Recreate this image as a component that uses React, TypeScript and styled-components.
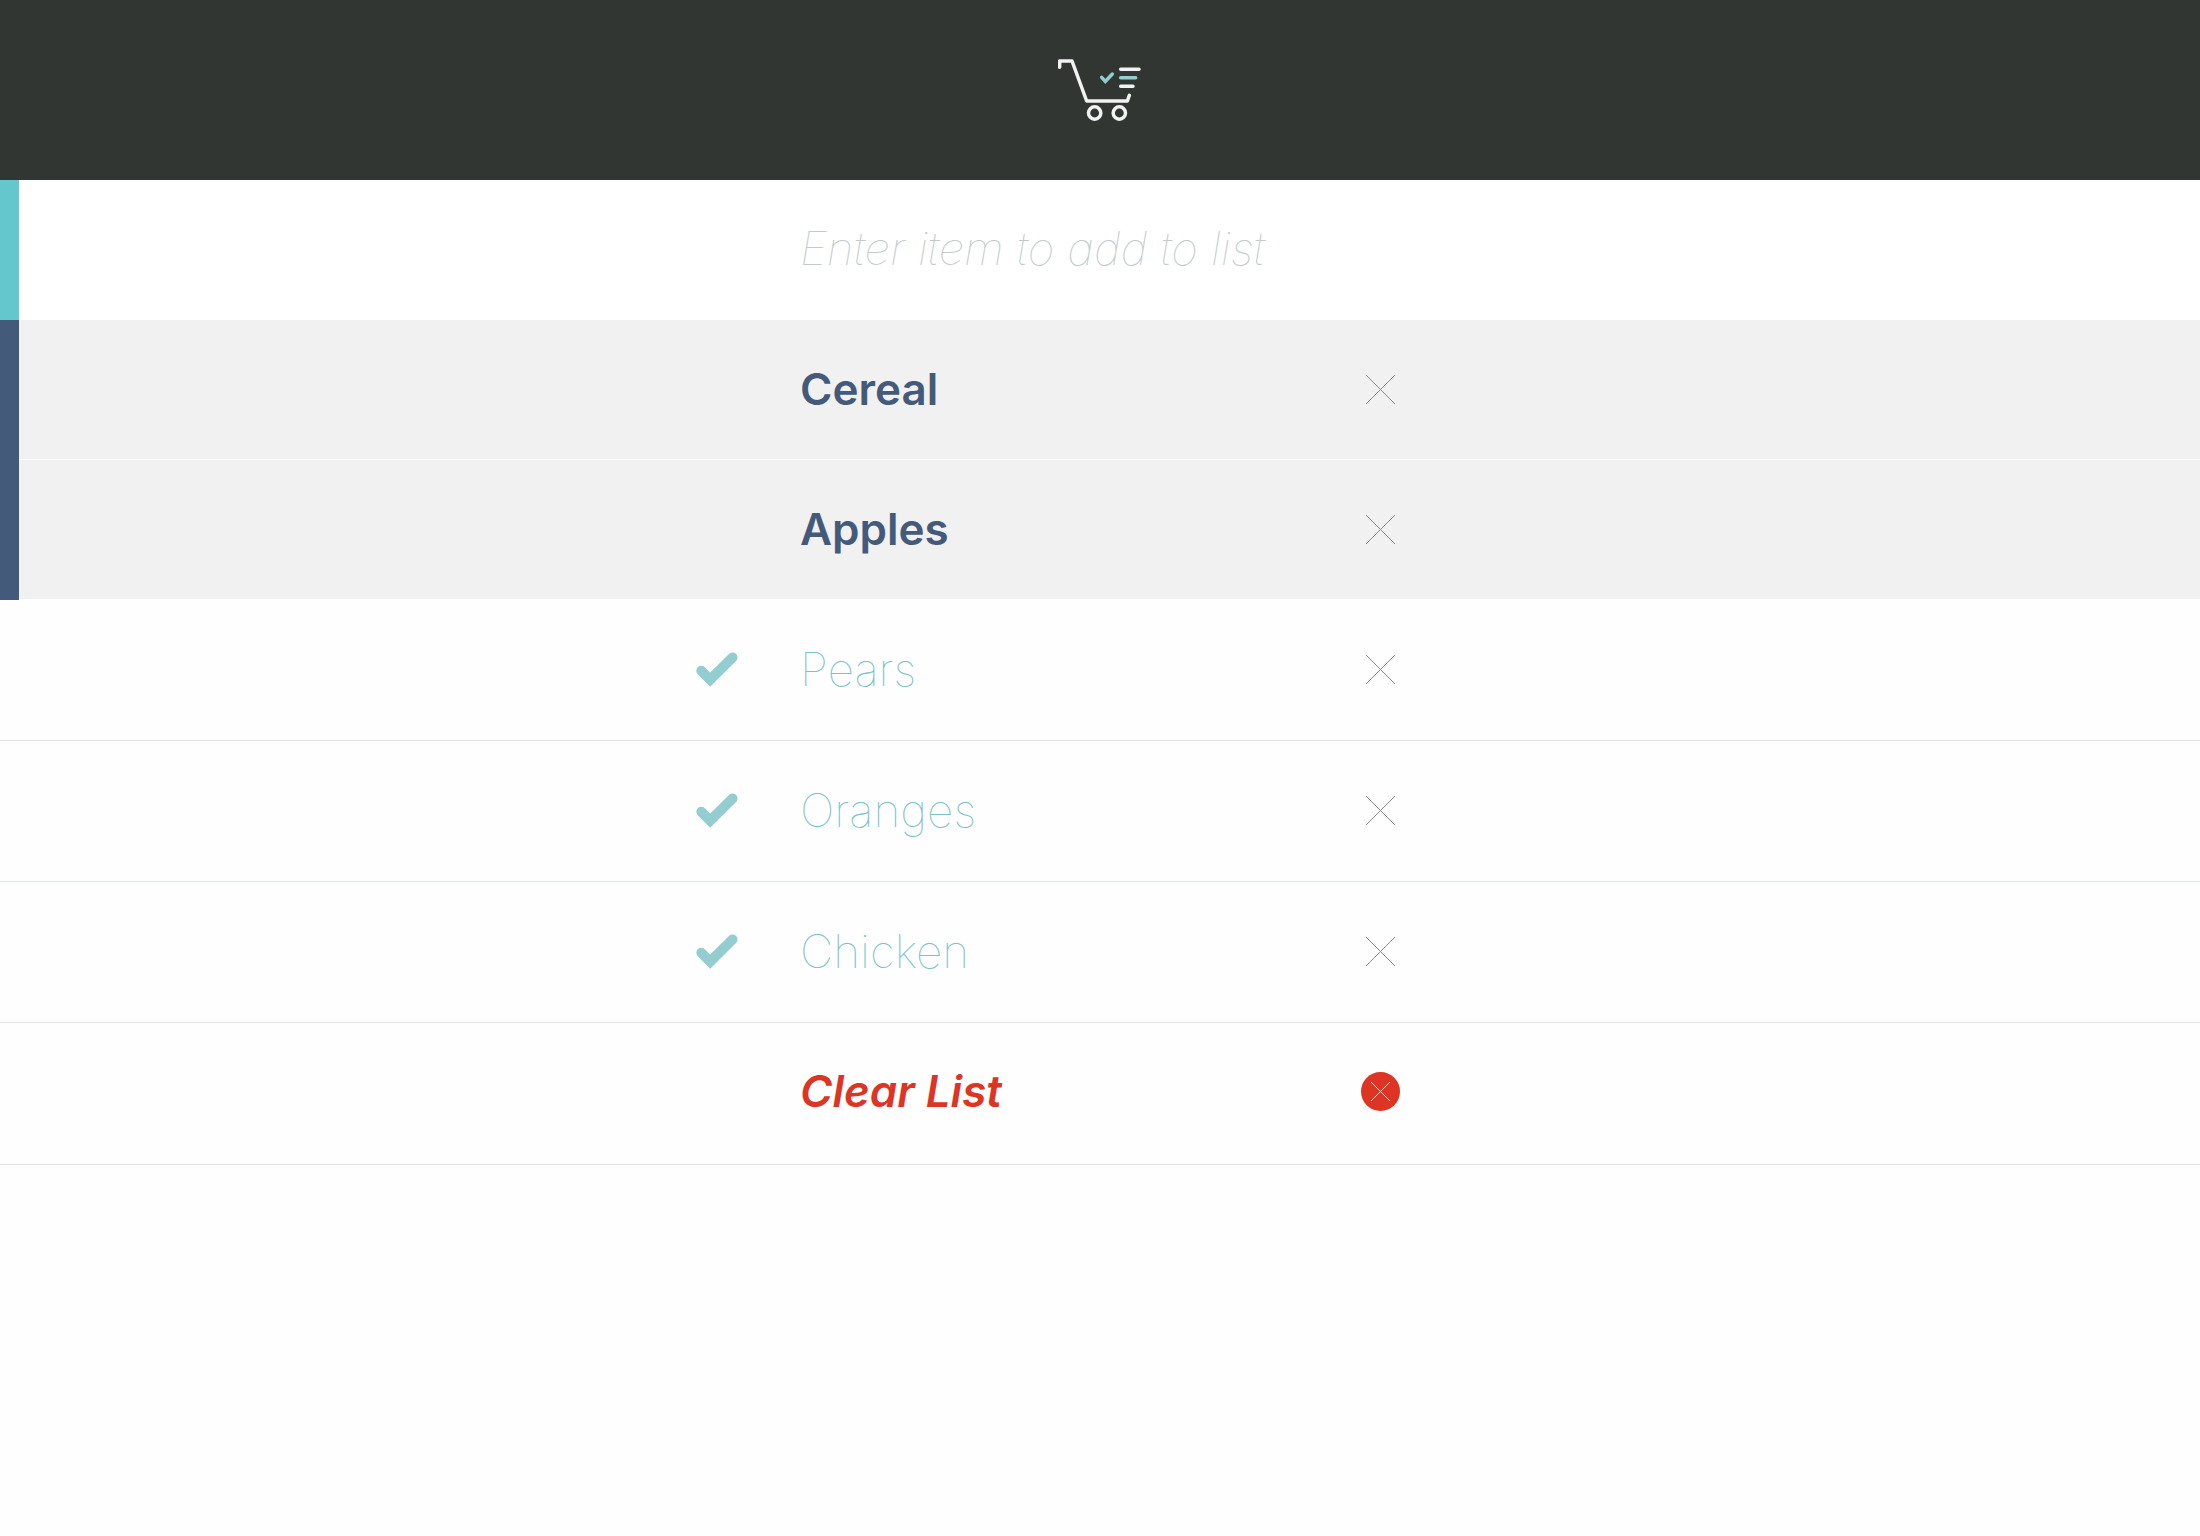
import React, { useState } from "react";
import styled, { createGlobalStyle, css } from "styled-components";

const colors = {
  header: "#313632",
  page: "#fefefe",
  accent: "#63c7cd",
  navy: "#445a7a",
  pending: "#f1f1f1",
  done: "#93cdcf",
  doneText: "#7ac2c5",
  rule: "#dfe6e6",
  hint: "#c3cbc9",
  danger: "#de3423",
  cross: "#8a8a8a",
};

const GlobalStyle = createGlobalStyle`
  *, *::before, *::after { box-sizing: border-box; }
  body {
    margin: 0;
    background: ${colors.page};
    font-family: Inter, "Open Sans", sans-serif;
    line-height: 56px;
  }
`;

const thinText = css`
  font-size: 46px;
  font-weight: 100;
`;

const strongText = css`
  font-size: 44px;
  font-weight: 600;
`;

const Header = styled.header`
  display: flex;
  align-items: center;
  justify-content: center;
  height: 180px;
  background: ${colors.header};
`;

const rowLayout = css`
  display: grid;
  grid-template-columns: minmax(104px, 1fr) minmax(0, 600px) minmax(0, 1fr);
  align-items: center;
  padding-bottom: 2px;
`;

const AddForm = styled.form`
  ${rowLayout}
  height: 140px;
  padding-bottom: 4px;
  background: #fff;
  box-shadow: inset 19px 0 ${colors.accent};
`;

const ItemInput = styled.input`
  grid-column: 2;
  width: 100%;
  padding: 0;
  border: 0;
  outline: 0;
  background: none;
  color: ${colors.navy};
  font: inherit;
  font-style: italic;
  ${thinText}

  &::placeholder {
    color: ${colors.hint};
    opacity: 1;
  }
`;

const List = styled.ul`
  margin: 0;
  padding: 0;
  list-style: none;
`;

const Item = styled.li<{ $done: boolean }>`
  ${rowLayout}
  ${(p) =>
    p.$done
      ? css`
          ${thinText}
          height: 141px;
          color: ${colors.doneText};
          border-bottom: 1px solid ${colors.rule};
        `
      : css`
          ${strongText}
          height: 140px;
          color: ${colors.navy};
          background: ${colors.pending};
          box-shadow: inset 19px 0 ${colors.navy}, inset 0 -1px #fff;
        `}
`;

const Tick = styled.span`
  position: relative;
  justify-self: end;
  display: flex;
  width: 42px;
  height: 35px;
  margin-right: 62px;

  input {
    position: absolute;
    inset: 0;
    width: 100%;
    height: 100%;
    margin: 0;
    opacity: 0;
    cursor: pointer;
  }
`;

const Content = styled.div`
  display: flex;
  align-items: center;
  justify-content: space-between;
`;

const Name = styled.label`
  cursor: pointer;
`;

const RemoveButton = styled.button`
  display: grid;
  place-items: center;
  width: 39px;
  height: 39px;
  padding: 0;
  border: 0;
  background: none;
  color: ${colors.cross};
  cursor: pointer;
`;

const ClearRow = styled.div`
  ${rowLayout}
  height: 142px;
  padding-bottom: 5px;
  border-bottom: 1px solid ${colors.rule};
`;

const ClearButton = styled.button`
  grid-column: 2;
  display: flex;
  align-items: center;
  justify-content: space-between;
  padding: 0;
  border: 0;
  background: none;
  color: ${colors.danger};
  font: inherit;
  font-style: italic;
  ${strongText}
  cursor: pointer;
`;

const Disc = styled.span`
  display: grid;
  place-items: center;
  width: 39px;
  height: 39px;
  border-radius: 50%;
  background: ${colors.danger};
  color: #fff;
`;

const CartLogo = () => (
  <svg width="84" height="62" viewBox="54 57 252 186" fill="none" stroke="#f2f2f2" strokeWidth="10.5" strokeLinecap="round" strokeLinejoin="round" role="img" aria-label="Shopping list">
    <path d="M59 82V63H96L140 183H262L268 166" />
    <circle cx="164" cy="219" r="18.5" />
    <circle cx="238" cy="219" r="18.5" />
    <path d="M242 88H297M242 138.500H279" />
    <path d="M242 113H287" stroke={colors.done} />
    <path d="M185 112L196 124L217 102" stroke={colors.done} strokeLinejoin="miter" />
  </svg>
);

const TickIcon = () => (
  <svg width="42" height="35" viewBox="49 69 126 105" fill="none" stroke={colors.done} strokeWidth="30" strokeLinecap="round" aria-hidden="true">
    <path d="M65 125.500L91.500 152L158.500 85.500" />
  </svg>
);

const Cross = ({ size }: { size: number }) => (
  <svg width={size} height={size} viewBox={`0 0 ${size} ${size}`} stroke="currentColor" strokeWidth="1" aria-hidden="true">
    <path d={`M0 0L${size} ${size}M${size} 0L0 ${size}`} />
  </svg>
);

type Entry = { name: string; done: boolean };

const initial: Entry[] = [
  { name: "Cereal", done: false },
  { name: "Apples", done: false },
  { name: "Pears", done: true },
  { name: "Oranges", done: true },
  { name: "Chicken", done: true },
];

export default function App() {
  const [items, setItems] = useState(initial);
  const [draft, setDraft] = useState("");

  const add = (event: React.FormEvent) => {
    event.preventDefault();
    const name = draft.trim();
    if (name && !items.some((i) => i.name === name)) setItems([{ name, done: false }, ...items]);
    setDraft("");
  };
  const toggle = (name: string) =>
    setItems(items.map((i) => (i.name === name ? { ...i, done: !i.done } : i)));
  const remove = (name: string) => setItems(items.filter((i) => i.name !== name));

  return (
    <>
      <GlobalStyle />
      <Header>
        <CartLogo />
      </Header>
      <main>
        <AddForm onSubmit={add}>
          <ItemInput
            aria-label="New item"
            placeholder="Enter item to add to list"
            value={draft}
            onChange={(e) => setDraft(e.target.value)}
          />
        </AddForm>
        <List>
          {items.map(({ name, done }) => (
            <Item key={name} $done={done}>
              <Tick>
                {done && <TickIcon />}
                <input id={`item-${name}`} type="checkbox" checked={done} onChange={() => toggle(name)} />
              </Tick>
              <Content>
                <Name htmlFor={`item-${name}`}>{name}</Name>
                <RemoveButton type="button" aria-label={`Remove ${name}`} onClick={() => remove(name)}>
                  <Cross size={29} />
                </RemoveButton>
              </Content>
            </Item>
          ))}
        </List>
        <ClearRow>
          <ClearButton type="button" onClick={() => setItems([])}>
            Clear List
            <Disc>
              <Cross size={19} />
            </Disc>
          </ClearButton>
        </ClearRow>
      </main>
    </>
  );
}
